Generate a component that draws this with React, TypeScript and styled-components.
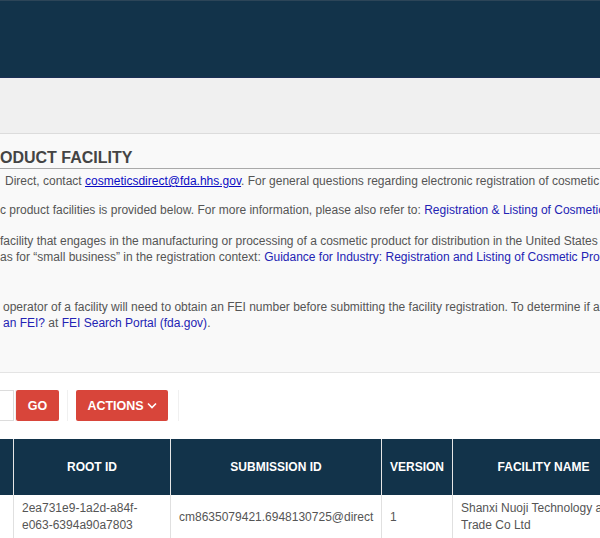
import React from "react";
import styled, { createGlobalStyle } from "styled-components";

const Global = createGlobalStyle`
  html, body { margin: 0; padding: 0; background: #fff; }
  body { font-family: "Liberation Sans", Arial, sans-serif; overflow: hidden; }
`;

const Page = styled.div`
  width: 600px;
  height: 538px;
  overflow: hidden;
  display: flex;
  flex-direction: column;
  background: #fff;
`;

const TopBar = styled.header`
  flex: none;
  height: 78px;
  box-sizing: border-box;
  background: #12334a;
  border-top: 1px solid #2c4558;
  border-bottom: 1px solid #1b2f55;
`;

const SubBar = styled.div`
  height: 55px;
  flex: none;
  background: #f0f0f0;
  border-bottom: 1px solid #dcdcdc;
`;

const Panel = styled.section`
  flex: none;
  height: 239px;
  box-sizing: border-box;
  background: #f9f9f9;
  border-bottom: 1px solid #e4e4e4;
  padding-top: 14px;
  overflow: hidden;
  white-space: nowrap;
`;

const Title = styled.h2`
  margin: 0;
  font-size: 16px;
  font-weight: bold;
  color: #444;
  line-height: 19px;
  padding-bottom: 1px;
  border-bottom: 1px solid #a9a9a9;
`;

const Para = styled.p<{ $gap: number; $indent: number }>`
  margin: ${(p) => p.$gap}px 0 0;
  padding-left: ${(p) => p.$indent}px;
  font-size: 12px;
  line-height: 16px;
  color: #555;
`;

const Line = styled.span`
  display: block;
`;

const Mail = styled.a`
  color: #0b0bc4;
  text-decoration: underline;
`;

const Link = styled.a`
  color: #2323b4;
  text-decoration: none;
`;

const Toolbar = styled.div`
  flex: none;
  display: flex;
  align-items: center;
  height: 31px;
  margin-top: 17px;
`;

const InputStub = styled.div`
  width: 14px;
  height: 31px;
  box-sizing: border-box;
  border: 1px solid #dcdcdc;
  border-left: none;
  background: #fff;
`;

const Button = styled.button<{ $w: number }>`
  width: ${(p) => p.$w}px;
  height: 31px;
  border: none;
  border-radius: 2px;
  background: #d8453a;
  color: #fff;
  font-family: "Liberation Sans", Arial, sans-serif;
  font-size: 12.5px;
  font-weight: bold;
  display: flex;
  align-items: center;
  justify-content: center;
  gap: 3px;
  padding: 0;
`;

const Sep = styled.div<{ $w: number }>`
  width: ${(p) => p.$w}px;
  height: 31px;
  display: flex;
  justify-content: center;
  &::after {
    content: "";
    width: 1px;
    background: #f0f0f0;
  }
`;

const Table = styled.table`
  flex: none;
  margin-top: 18px;
  border-collapse: collapse;
  table-layout: fixed;
  width: 630px;
  font-size: 12px;
`;

const Th = styled.th<{ $w: number }>`
  width: ${(p) => p.$w}px;
  height: 56px;
  padding: 0;
  background: #12334a;
  color: #fff;
  font-weight: bold;
  text-align: center;
  white-space: nowrap;
  border-left: 1px solid #e6e6e6;
  &:first-child { border-left: none; }
`;

const Td = styled.td`
  padding: 5px 8px 5px;
  color: #555;
  line-height: 17px;
  vertical-align: middle;
  white-space: nowrap;
  border-left: 1px solid #e0e0e0;
  border-bottom: 1px solid #e0e0e0;
  &:first-child { border-left: none; }
`;

const Chevron = () => (
  <svg width="10" height="7" viewBox="0 0 10 7" fill="none">
    <path d="M1 1.5 L5 5.5 L9 1.5" stroke="#fff" strokeWidth="1.6" />
  </svg>
);

export default function App() {
  return (
    <>
      <Global />
      <Page>
        <TopBar />
        <SubBar />
        <Panel>
          <Title>ODUCT FACILITY</Title>
          <Para $gap={4} $indent={5}>
            Direct, contact <Mail href="#">cosmeticsdirect@fda.hhs.gov</Mail>. For general questions regarding electronic registration of cosmetic
          </Para>
          <Para $gap={13} $indent={0}>
            c product facilities is provided below. For more information, please also refer to: <Link href="#">Registration &amp; Listing of Cosmetic</Link>
          </Para>
          <Para $gap={15} $indent={0}>
            <Line>facility that engages in the manufacturing or processing of a cosmetic product for distribution in the United States</Line>
            <Line>as for “small business” in the registration context: <Link href="#">Guidance for Industry: Registration and Listing of Cosmetic Prod</Link></Line>
          </Para>
          <Para $gap={34} $indent={3}>
            <Line>operator of a facility will need to obtain an FEI number before submitting the facility registration. To determine if an</Line>
            <Line><Link href="#">an FEI?</Link> at <Link href="#">FEI Search Portal (fda.gov)</Link>.</Line>
          </Para>
        </Panel>
        <Toolbar>
          <InputStub />
          <Sep $w={2} />
          <Button $w={43}>GO</Button>
          <Sep $w={17} />
          <Button $w={92}>
            ACTIONS <Chevron />
          </Button>
          <Sep $w={20} />
        </Toolbar>
        <Table>
          <thead>
            <tr>
              <Th $w={13} />
              <Th $w={156}>ROOT ID</Th>
              <Th $w={210}>SUBMISSION ID</Th>
              <Th $w={70}>VERSION</Th>
              <Th $w={181}>FACILITY NAME</Th>
            </tr>
          </thead>
          <tbody>
            <tr>
              <Td />
              <Td>2ea731e9-1a2d-a84f-<br />e063-6394a90a7803</Td>
              <Td>cm8635079421.6948130725@direct</Td>
              <Td>1</Td>
              <Td>Shanxi Nuoji Technology and<br />Trade Co Ltd</Td>
            </tr>
          </tbody>
        </Table>
      </Page>
    </>
  );
}
